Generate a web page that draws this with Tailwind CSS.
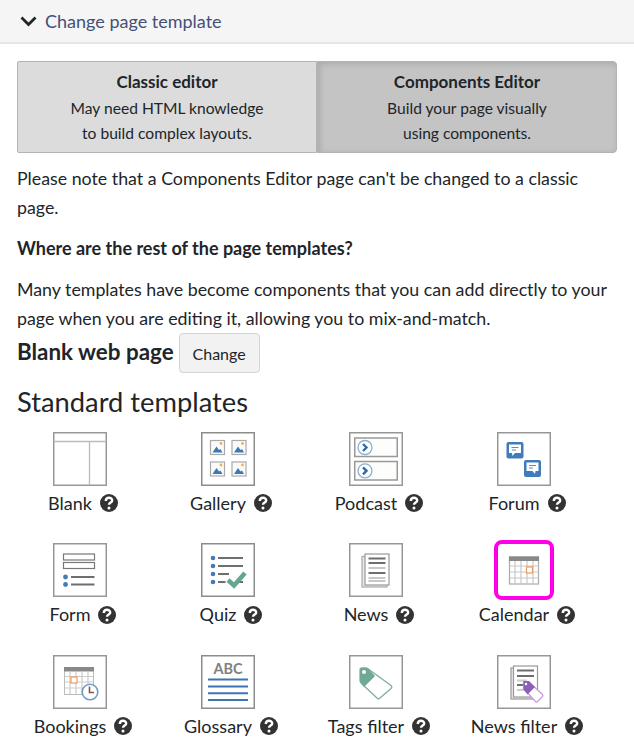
<!DOCTYPE html>
<html><head><meta charset="utf-8"><script src="https://cdn.jsdelivr.net/npm/@tailwindcss/browser@4"></script></head>
<body class="bg-white overflow-hidden font-['Lato',sans-serif] text-[#212529]">
<div class="w-[634px] h-[750px] overflow-hidden">
<div class="h-[44px] bg-[#f5f5f5] border-b-2 border-[#e6e6e6] flex items-center pl-[20px]">
<svg class="w-[17px] h-[12px]" viewBox="0 0 17 12"><path d="M1.500 2.500 8.500 9.500l7-7" fill="none" stroke="#212529" stroke-width="2.800"/></svg>
<span class="ml-[8px] text-[18px] text-[#435078]">Change page template</span>
</div>
<div class="mx-[17px] mt-[17px] w-[600px] h-[92px] flex text-center text-[15.6px] leading-[25px]">
<div class="w-[300px] bg-[#dcdcdc] border border-[#b3b3b3] rounded-l-[2px] pt-[7px]"><div class="font-bold text-[17px] mb-[1.5px]">Classic editor</div><div>May need HTML knowledge</div><div>to build complex layouts.</div></div>
<div class="w-[300px] bg-[#c4c4c4] border border-[#b3b3b3] rounded-r-[4px] pt-[7px] shadow-[inset_2px_2px_6px_rgba(0,0,0,0.14)]"><div class="font-bold text-[17px] mb-[1.5px]">Components Editor</div><div>Build your page visually</div><div>using components.</div></div>
</div>
<div class="px-[17px] text-[17.8px] leading-[29px] mt-[11px]">
<p>Please note that a Components Editor page can't be changed to a classic page.</p>
<p class="font-bold text-[18px] mt-[12px]">Where are the rest of the page templates?</p>
<p class="mt-[12px]">Many templates have become components that you can add directly to your page when you are editing it, allowing you to mix-and-match.</p>
<div class="flex items-center h-[40px]"><span class="font-bold text-[22.4px] pb-[4px]">Blank web page</span><span class="ml-[5px] w-[81px] h-[40px] flex items-center justify-center bg-[#f2f2f2] border border-[#d4d4d4] rounded-[4px] text-[16px]">Change</span></div>
<h2 class="text-[27.3px] leading-[36px] mt-[11px]">Standard templates</h2>
</div>
<div class="grid grid-cols-4 w-[592px] ml-[6px] mt-[11.9px] auto-rows-[111.5px] text-[18px]">

<div class="flex flex-col items-center"><div class="w-[54px] h-[54px]"><svg class="w-full h-full" viewBox="0 0 54 54"><rect x=".75" y=".75" width="52.500" height="52.500" fill="#fff" stroke="#979797" stroke-width="1.500"/><path d="M1 9.500h52M36.500 10v43" stroke="#bbb" stroke-width="1.300" fill="none"/></svg></div><div class="mt-[5.2px] h-[24px] flex items-center ml-[6px]"><span>Blank</span><svg class="ml-[8px] w-[18px] h-[18px]" viewBox="0 0 18 18"><circle cx="9" cy="9" r="9" fill="#333"/><path d="M5.800 7c0-4.200 6.400-4.200 6.400-.5 0 2.200-3.200 2-3.200 4.300" stroke="#fff" stroke-width="2.400" fill="none"/><circle cx="9" cy="14" r="1.500" fill="#fff"/></svg></div></div>

<div class="flex flex-col items-center"><div class="w-[54px] h-[54px]"><svg class="w-full h-full" viewBox="0 0 54 54"><rect x=".75" y=".75" width="52.500" height="52.500" fill="#fff" stroke="#8c8c8c" stroke-width="1.500"/>
<g fill="#fafafa" stroke="#aaa" stroke-width="1.200"><rect x="9.500" y="8.500" width="14" height="14"/><rect x="31" y="8.500" width="14" height="14"/><rect x="9.500" y="30" width="14" height="14"/><rect x="31" y="30" width="14" height="14"/></g>
<g fill="#3c78b4"><path d="M11.500 20.500l4-6 2.500 3.500 1.500-1 2 3.500z"/><path d="M33 20.500l4-6 2.500 3.500 1.500-1 2 3.500z"/><path d="M11.500 42l4-6 2.500 3.500 1.500-1 2 3.500z"/><path d="M33 42l4-6 2.500 3.500 1.500-1 2 3.500z"/></g>
<g fill="#f0b050"><circle cx="20" cy="11.500" r="1.400"/><circle cx="41.500" cy="11.500" r="1.400"/><circle cx="20" cy="33" r="1.400"/><circle cx="41.500" cy="33" r="1.400"/></g>
</svg></div><div class="mt-[5.2px] h-[24px] flex items-center ml-[6px]"><span>Gallery</span><svg class="ml-[8px] w-[18px] h-[18px]" viewBox="0 0 18 18"><circle cx="9" cy="9" r="9" fill="#333"/><path d="M5.800 7c0-4.200 6.400-4.200 6.400-.5 0 2.200-3.200 2-3.200 4.300" stroke="#fff" stroke-width="2.400" fill="none"/><circle cx="9" cy="14" r="1.500" fill="#fff"/></svg></div></div>

<div class="flex flex-col items-center"><div class="w-[54px] h-[54px]"><svg class="w-full h-full" viewBox="0 0 54 54"><rect x=".75" y=".75" width="52.500" height="52.500" fill="#fff" stroke="#979797" stroke-width="1.500"/>
<rect x="5.750" y="6" width="42.500" height="18.500" fill="#fdfdfb" stroke="#999" stroke-width="1.500"/><rect x="5.750" y="29.500" width="42.500" height="18.500" fill="#fdfdfb" stroke="#999" stroke-width="1.500"/>
<circle cx="16" cy="15.500" r="7" fill="#fff" stroke="#8ab0d4" stroke-width="1.300"/><path d="M14 12l3.500 3.500L14 19" stroke="#2e6ca4" stroke-width="2.400" fill="none"/>
<circle cx="16" cy="38.800" r="7" fill="#fff" stroke="#8ab0d4" stroke-width="1.300"/><path d="M14 35.300l3.500 3.500-3.500 3.500" stroke="#2e6ca4" stroke-width="2.400" fill="none"/>
</svg></div><div class="mt-[5.2px] h-[24px] flex items-center ml-[6px]"><span>Podcast</span><svg class="ml-[8px] w-[18px] h-[18px]" viewBox="0 0 18 18"><circle cx="9" cy="9" r="9" fill="#333"/><path d="M5.800 7c0-4.200 6.400-4.200 6.400-.5 0 2.200-3.200 2-3.200 4.300" stroke="#fff" stroke-width="2.400" fill="none"/><circle cx="9" cy="14" r="1.500" fill="#fff"/></svg></div></div>

<div class="flex flex-col items-center"><div class="w-[54px] h-[54px]"><svg class="w-full h-full" viewBox="0 0 54 54"><rect x=".75" y=".75" width="52.500" height="52.500" fill="#fff" stroke="#979797" stroke-width="1.500"/>
<rect x="9.500" y="10" width="17" height="16.500" rx="2" fill="#3f7cb8"/><path d="M12 12.500h12v8.500h-6l-2.500 3-.5-3h-3z" fill="#fff"/><path d="M14.500 15.500h7M15 18h4" stroke="#5a8fc4"/>
<rect x="27" y="28" width="17" height="17" rx="2" fill="#3f7cb8"/><path d="M29.500 30.500h12v8.500h-3l-.5 3-2.500-3h-6z" fill="#fff"/><path d="M32 33.500h7M32 36h4" stroke="#5a8fc4"/>
</svg></div><div class="mt-[5.2px] h-[24px] flex items-center ml-[6px]"><span>Forum</span><svg class="ml-[8px] w-[18px] h-[18px]" viewBox="0 0 18 18"><circle cx="9" cy="9" r="9" fill="#333"/><path d="M5.800 7c0-4.200 6.400-4.200 6.400-.5 0 2.200-3.200 2-3.200 4.300" stroke="#fff" stroke-width="2.400" fill="none"/><circle cx="9" cy="14" r="1.500" fill="#fff"/></svg></div></div>

<div class="flex flex-col items-center"><div class="w-[54px] h-[54px]"><svg class="w-full h-full" viewBox="0 0 54 54"><rect x=".75" y=".75" width="52.500" height="52.500" fill="#fff" stroke="#979797" stroke-width="1.500"/>
<rect x="10.500" y="11" width="31" height="6" fill="#fff" stroke="#777" stroke-width="1.200"/><rect x="10.500" y="19.500" width="31" height="6" fill="#fff" stroke="#777" stroke-width="1.200"/>
<circle cx="12.500" cy="34" r="2.400" fill="#3f7cb8"/><circle cx="12.500" cy="41.500" r="2.400" fill="#3f7cb8"/><path d="M18 34h23.500M18 41.500h23.500" stroke="#6e6e6e" stroke-width="2"/>
</svg></div><div class="mt-[5.2px] h-[24px] flex items-center ml-[6px]"><span>Form</span><svg class="ml-[8px] w-[18px] h-[18px]" viewBox="0 0 18 18"><circle cx="9" cy="9" r="9" fill="#333"/><path d="M5.800 7c0-4.200 6.400-4.200 6.400-.5 0 2.200-3.200 2-3.200 4.300" stroke="#fff" stroke-width="2.400" fill="none"/><circle cx="9" cy="14" r="1.500" fill="#fff"/></svg></div></div>

<div class="flex flex-col items-center"><div class="w-[54px] h-[54px]"><svg class="w-full h-full" viewBox="0 0 54 54"><rect x=".75" y=".75" width="52.500" height="52.500" fill="#fff" stroke="#8c8c8c" stroke-width="1.500"/>
<circle cx="12" cy="15" r="2.300" fill="#3f7cb8"/><circle cx="12" cy="23" r="2.300" fill="#3f7cb8"/><circle cx="12" cy="31" r="2.300" fill="#3f7cb8"/><circle cx="12" cy="39" r="2.300" fill="#3f7cb8"/>
<path d="M17 15h25M17 23h25M17 31h11M17 39h7.500M38 39h4" stroke="#6e6e6e" stroke-width="2"/>
<path d="M27 37l6 5.500L44 30" stroke="#62a88c" stroke-width="4.500" fill="none"/>
</svg></div><div class="mt-[5.2px] h-[24px] flex items-center ml-[6px]"><span>Quiz</span><svg class="ml-[8px] w-[18px] h-[18px]" viewBox="0 0 18 18"><circle cx="9" cy="9" r="9" fill="#333"/><path d="M5.800 7c0-4.200 6.400-4.200 6.400-.5 0 2.200-3.200 2-3.200 4.300" stroke="#fff" stroke-width="2.400" fill="none"/><circle cx="9" cy="14" r="1.500" fill="#fff"/></svg></div></div>

<div class="flex flex-col items-center"><div class="w-[54px] h-[54px]"><svg class="w-full h-full" viewBox="0 0 54 54"><rect x=".75" y=".75" width="52.500" height="52.500" fill="#fff" stroke="#979797" stroke-width="1.500"/>
<rect x="13" y="13.500" width="25" height="30.500" fill="#e8e8e8" stroke="#aaa" stroke-width="1.200"/><rect x="16" y="11" width="24" height="31" fill="#fff" stroke="#999" stroke-width="1.200"/>
<path d="M19.500 15.500h17M19.500 20h17M19.500 30h17" stroke="#6e6e6e" stroke-width="1.800"/><path d="M19.500 25h17M19.500 35h17M19.500 38h17" stroke="#c8c8c8" stroke-width="1.800"/>
</svg></div><div class="mt-[5.2px] h-[24px] flex items-center ml-[6px]"><span>News</span><svg class="ml-[8px] w-[18px] h-[18px]" viewBox="0 0 18 18"><circle cx="9" cy="9" r="9" fill="#333"/><path d="M5.800 7c0-4.200 6.400-4.200 6.400-.5 0 2.200-3.200 2-3.200 4.300" stroke="#fff" stroke-width="2.400" fill="none"/><circle cx="9" cy="14" r="1.500" fill="#fff"/></svg></div></div>

<div class="flex flex-col items-center"><div class="w-[54px] h-[54px] relative"><div class="absolute -inset-[3px] border-[4px] border-[#ff00e6] rounded-[8px]"></div><svg class="w-full h-full" viewBox="0 0 54 54">
<rect x="12.500" y="14" width="29" height="27" fill="#fff" stroke="#aaa" stroke-width="1.200"/><rect x="12" y="13.500" width="30" height="4.500" fill="#888"/>
<path d="M13 23h29M13 29h29M13 35h29M18 18v23M24 18v23M30 18v23M36 18v23" stroke="#c8c8c8" stroke-width="1.200"/><rect x="29.500" y="24" width="6" height="6" fill="#fff" stroke="#ee9a5a" stroke-width="1.200"/>
</svg></div><div class="mt-[5.2px] h-[24px] flex items-center ml-[6px]"><span>Calendar</span><svg class="ml-[8px] w-[18px] h-[18px]" viewBox="0 0 18 18"><circle cx="9" cy="9" r="9" fill="#333"/><path d="M5.800 7c0-4.200 6.400-4.200 6.400-.5 0 2.200-3.200 2-3.200 4.300" stroke="#fff" stroke-width="2.400" fill="none"/><circle cx="9" cy="14" r="1.500" fill="#fff"/></svg></div></div>

<div class="flex flex-col items-center"><div class="w-[54px] h-[54px]"><svg class="w-full h-full" viewBox="0 0 54 54"><rect x=".75" y=".75" width="52.500" height="52.500" fill="#fff" stroke="#979797" stroke-width="1.500"/>
<rect x="11.500" y="12.500" width="29" height="27" fill="#fff" stroke="#bbb"/><rect x="11" y="12" width="30" height="4.500" fill="#888"/>
<path d="M11.500 21.500h29M11.500 27h29M11.500 33h29M17 16v23M23 16v23M29 16v23M35 16v23" stroke="#ccc" stroke-width="1.200"/><rect x="18" y="22" width="6" height="6" fill="#fff" stroke="#ee9a5a" stroke-width="1.200"/>
<circle cx="37" cy="37" r="7.800" fill="#fff" stroke="#6e9cc8" stroke-width="1.600"/><path d="M36.500 31.500v6H41" stroke="#7a5a55" stroke-width="1.600" fill="none"/>
</svg></div><div class="mt-[5.2px] h-[24px] flex items-center ml-[6px]"><span>Bookings</span><svg class="ml-[8px] w-[18px] h-[18px]" viewBox="0 0 18 18"><circle cx="9" cy="9" r="9" fill="#333"/><path d="M5.800 7c0-4.200 6.400-4.200 6.400-.5 0 2.200-3.200 2-3.200 4.300" stroke="#fff" stroke-width="2.400" fill="none"/><circle cx="9" cy="14" r="1.500" fill="#fff"/></svg></div></div>

<div class="flex flex-col items-center"><div class="w-[54px] h-[54px] relative"><svg class="w-full h-full" viewBox="0 0 54 54"><rect x=".75" y=".75" width="52.500" height="52.500" fill="#fff" stroke="#8c8c8c" stroke-width="1.500"/>
<path d="M7 24.500h40M7 31.500h40M7 38.300h40M7 45h40" stroke="#3f74b0" stroke-width="2"/></svg><span class="absolute left-0 right-0 top-[5px] text-center font-bold text-[14.5px] leading-[17px] text-[#808080]">ABC</span></div><div class="mt-[5.2px] h-[24px] flex items-center ml-[6px]"><span>Glossary</span><svg class="ml-[8px] w-[18px] h-[18px]" viewBox="0 0 18 18"><circle cx="9" cy="9" r="9" fill="#333"/><path d="M5.800 7c0-4.200 6.400-4.200 6.400-.5 0 2.200-3.200 2-3.200 4.300" stroke="#fff" stroke-width="2.400" fill="none"/><circle cx="9" cy="14" r="1.500" fill="#fff"/></svg></div></div>

<div class="flex flex-col items-center"><div class="w-[54px] h-[54px]"><svg class="w-full h-full" viewBox="0 0 54 54"><rect x=".75" y=".75" width="52.500" height="52.500" fill="#fff" stroke="#979797" stroke-width="1.500"/>
<path d="M11 15c0-1 1-2 2-2h4c1 0 2 .5 3 1.500l22 16c1 1 1 2 0 3L31 43c-1 1-2 1-3 0L13 29c-1-1-2-2-2-3z" fill="#fff" stroke="#7fb09e" stroke-width="1.300"/>
<path d="M11 15c0-1 1-2 2-2h4c1 0 2 .5 3 1.500l6 6.500-11 11-2-3c-1-1-2-2-2-3z" fill="#6fa893"/><circle cx="15" cy="17" r="2" fill="#fff"/>
</svg></div><div class="mt-[5.2px] h-[24px] flex items-center ml-[6px]"><span>Tags filter</span><svg class="ml-[8px] w-[18px] h-[18px]" viewBox="0 0 18 18"><circle cx="9" cy="9" r="9" fill="#333"/><path d="M5.800 7c0-4.200 6.400-4.200 6.400-.5 0 2.200-3.200 2-3.200 4.300" stroke="#fff" stroke-width="2.400" fill="none"/><circle cx="9" cy="14" r="1.500" fill="#fff"/></svg></div></div>

<div class="flex flex-col items-center"><div class="w-[54px] h-[54px]"><svg class="w-full h-full" viewBox="0 0 54 54"><rect x=".75" y=".75" width="52.500" height="52.500" fill="#fff" stroke="#979797" stroke-width="1.500"/>
<rect x="14" y="13" width="25" height="31" fill="#e8e8e8" stroke="#999" stroke-width="1.200"/><rect x="16.500" y="11" width="24" height="31" fill="#fff" stroke="#999" stroke-width="1.200"/>
<path d="M20 15.500h17M20 21h17M20 30h8" stroke="#6e6e6e" stroke-width="1.800"/><path d="M20 25.500h10M20 35h8" stroke="#ccc" stroke-width="1.800"/>
<path d="M26.500 26.500h5l14 13c.7.700.7 1.300 0 2l-5 5c-.7.700-1.300.700-2 0l-12-13z" fill="#fff" stroke="#c49ad8" stroke-width="1.200"/><path d="M26.500 26h5.500l6 6-7.500 7.500-4-5z" fill="#8e5fb8"/><circle cx="29" cy="29" r="1.200" fill="#fff"/>
</svg></div><div class="mt-[5.2px] h-[24px] flex items-center ml-[6px]"><span>News filter</span><svg class="ml-[8px] w-[18px] h-[18px]" viewBox="0 0 18 18"><circle cx="9" cy="9" r="9" fill="#333"/><path d="M5.800 7c0-4.200 6.400-4.200 6.400-.5 0 2.200-3.200 2-3.200 4.300" stroke="#fff" stroke-width="2.400" fill="none"/><circle cx="9" cy="14" r="1.500" fill="#fff"/></svg></div></div>

</div>
</div>
</body></html>
